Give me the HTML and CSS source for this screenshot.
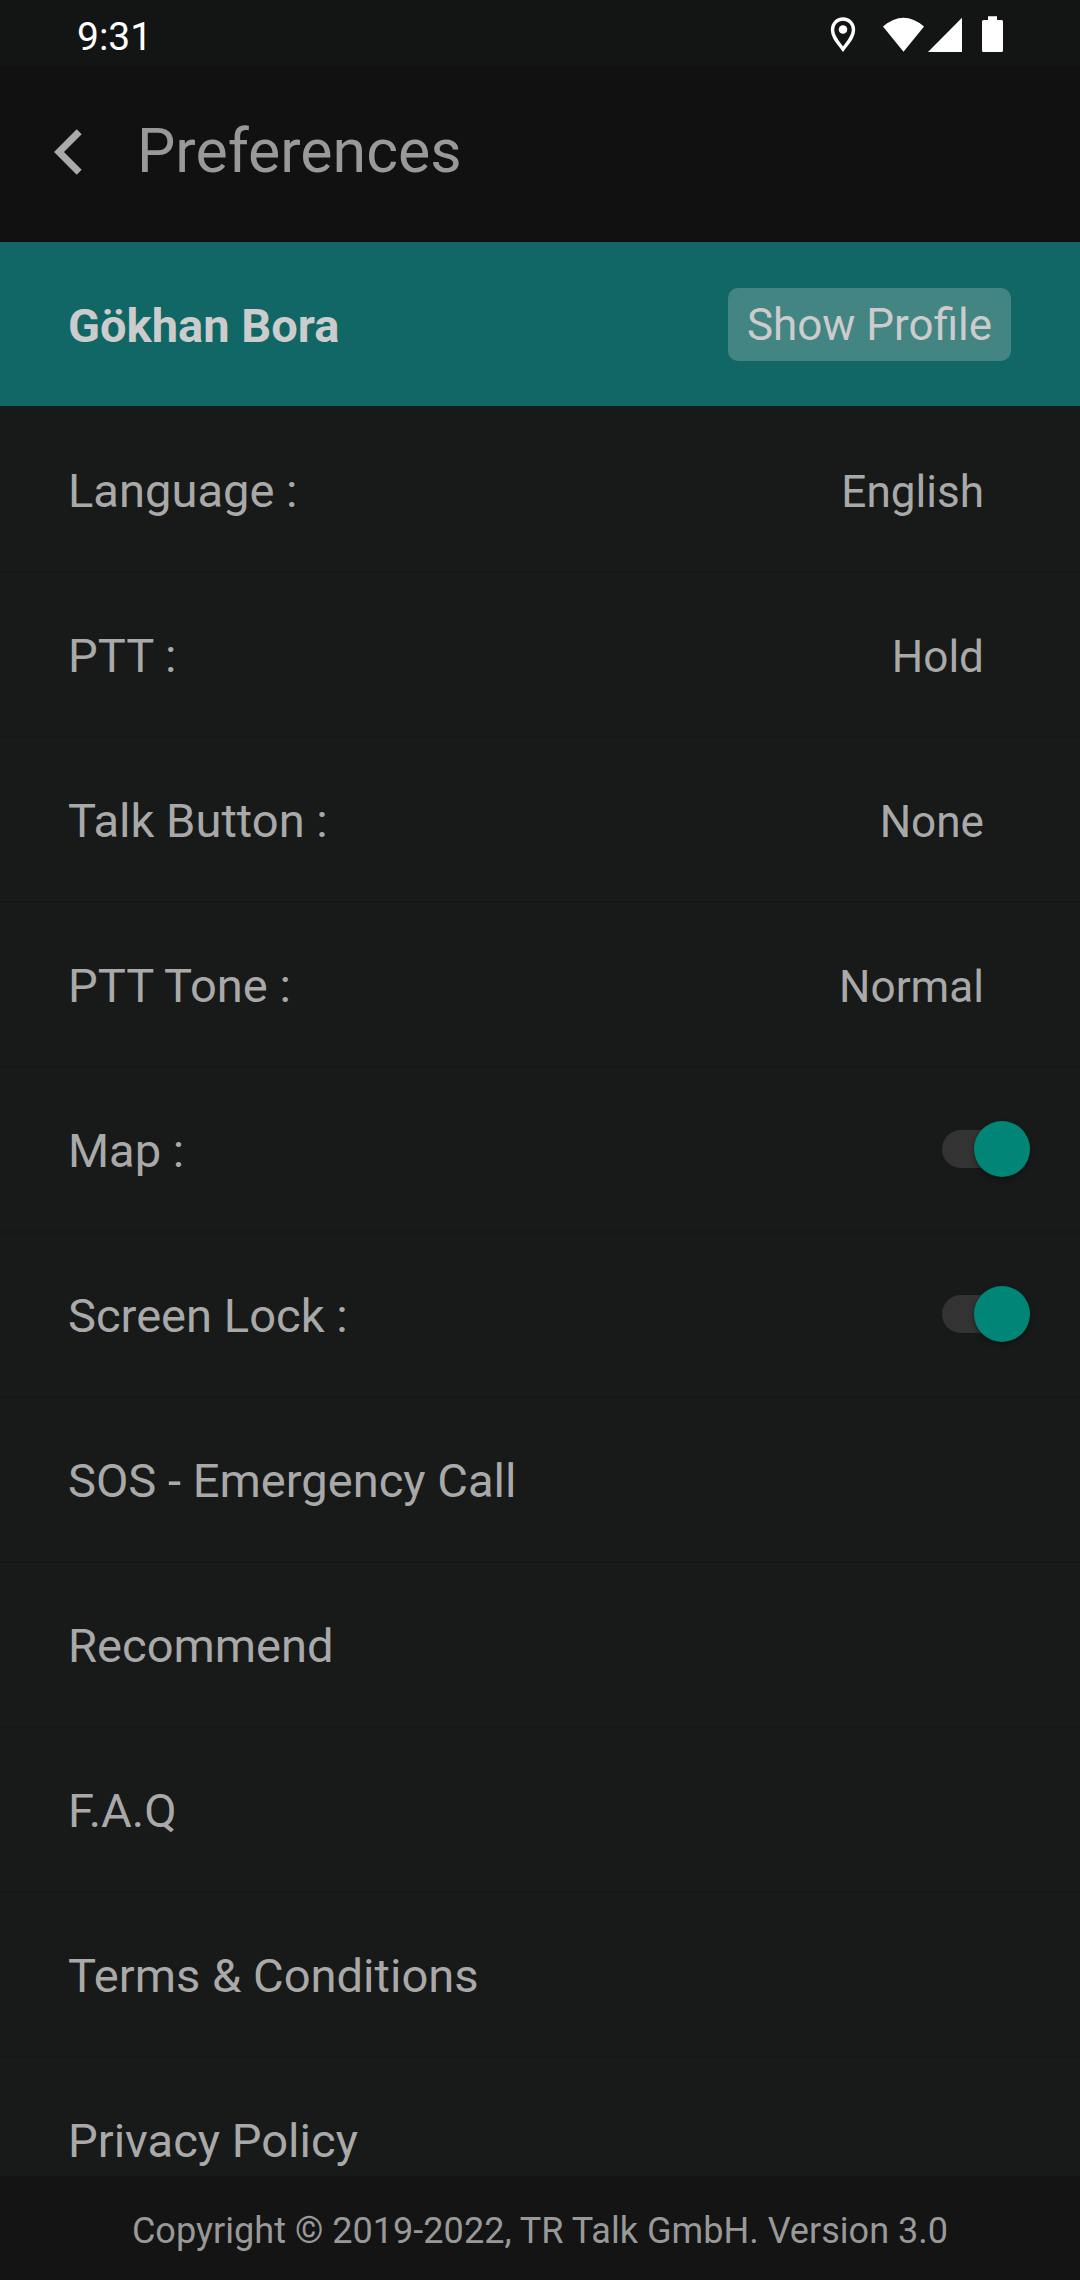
FILE: index.html
```html
<!DOCTYPE html>
<html lang="en">
<head>
    <meta charset="UTF-8">
    <meta name="viewport" content="width=device-width, initial-scale=1.0">
    <title>Preferences</title>
    <link rel="stylesheet" href="styles.css">
</head>
<body>
    <div class="screen">
        <div class="status-bar">
            <span class="time">9:31</span>
            <svg class="status-icons" width="174" height="38" viewBox="0 0 174 38">
                <path d="M14 3C7.900 3 3.500 7.600 3.500 13.800c0 7.200 5.400 12.500 10.500 19.400C19.100 26.300 24.500 21 24.500 13.800C24.500 7.600 20.100 3 14 3z" fill="none" stroke="#fff" stroke-width="3.4"/>
                <circle cx="14" cy="13.500" r="4.300" fill="#fff"/>
                <path d="M54 10.500Q74.500-7 95 10.500L74.500 35.700z" fill="#fff"/>
                <path d="M99 36L133 1.700V36z" fill="#fff"/>
                <path d="M159 0.300h9v3.700h4.500q1.500 0 1.500 1.500v29q0 1.500-1.500 1.500h-18q-1.500 0-1.500-1.500v-29q0-1.500 1.500-1.500h4.500z" fill="#fff"/>
            </svg>
        </div>

        <div class="header">
            <svg class="back" width="30" height="48" viewBox="0 0 30 48">
                <path d="M26.200 3.800L6 24L26.200 44.200" fill="none" stroke="#aaa" stroke-width="7"/>
            </svg>
            <h1>Preferences</h1>
        </div>

        <div class="profile">
            <span class="name">Gökhan Bora</span>
            <button class="show-profile">Show Profile</button>
        </div>

        <div class="list">
            <div class="row"><span>Language :</span><span class="value">English</span></div>
            <div class="row"><span>PTT :</span><span class="value">Hold</span></div>
            <div class="row"><span>Talk Button :</span><span class="value">None</span></div>
            <div class="row"><span>PTT Tone :</span><span class="value">Normal</span></div>
            <div class="row"><span>Map :</span><span class="switch"><span class="thumb"></span></span></div>
            <div class="row"><span>Screen Lock :</span><span class="switch"><span class="thumb"></span></span></div>
            <div class="row"><span>SOS - Emergency Call</span></div>
            <div class="row"><span>Recommend</span></div>
            <div class="row"><span>F.A.Q</span></div>
            <div class="row"><span>Terms &amp; Conditions</span></div>
            <div class="row"><span>Privacy Policy</span></div>
        </div>

        <div class="footer">Copyright © 2019-2022, TR Talk GmbH. Version 3.0</div>
    </div>
</body>
</html>
```
FILE: styles.css
```css
* {
    box-sizing: border-box;
}

body {
    margin: 0;
    background-color: #181a19;
    color: #a9a9a9;
    font-family: Roboto, sans-serif;
}

.screen {
    display: flex;
    flex-direction: column;
    width: 1080px;
    height: 2280px;
    overflow: hidden;
}

.status-bar {
    display: flex;
    justify-content: space-between;
    flex: none;
    height: 66px;
    padding: 16px 77px 0 77px;
    background-color: #131514;
    color: white;
}

.time {
    margin-top: -2px;
    font-size: 39px;
    line-height: 46px;
}

.status-icons {
    overflow: visible;
}

.header {
    display: flex;
    align-items: center;
    flex: none;
    height: 176px;
    padding: 0 0 4px 53px;
    background-color: #111;
}

h1 {
    margin: 0 0 2px 54px;
    font-size: 60.8px;
    font-weight: 400;
    color: #999;
}

.profile {
    display: flex;
    align-items: center;
    justify-content: space-between;
    flex: none;
    height: 164px;
    padding: 1px 69px 0 68px;
    background-color: #116765;
    color: #ccc;
}

.name {
    margin-top: 1px;
    font-size: 47px;
    font-weight: 700;
}

.show-profile {
    width: 283px;
    height: 73px;
    padding: 0;
    border: none;
    border-radius: 10px;
    background-color: #438583;
    color: #ccc;
    font-family: inherit;
    font-size: 44px;
}

.list {
    flex: 1;
    min-height: 0;
    padding-top: 2px;
    overflow: hidden;
}

.row {
    display: flex;
    align-items: center;
    justify-content: space-between;
    height: 165px;
    padding: 2px 50px 0 68px;
    border-bottom: 2px solid #151716;
    font-size: 47.1px;
}

.value {
    margin-right: 46px;
    padding-top: 3px;
    font-size: 44.1px;
}

.switch {
    position: relative;
    width: 88px;
    height: 38px;
    margin-bottom: 4px;
    border-radius: 19px;
    background-color: #333;
}

.thumb {
    position: absolute;
    top: -9px;
    right: 0;
    width: 56px;
    height: 56px;
    border-radius: 50%;
    background-color: #008577;
    box-shadow: 0 2px 5px rgba(0, 0, 0, 0.4);
}

.footer {
    flex: none;
    height: 104px;
    background-color: #141414;
    color: #999;
    font-size: 36.1px;
    line-height: 110px;
    text-align: center;
}
```
